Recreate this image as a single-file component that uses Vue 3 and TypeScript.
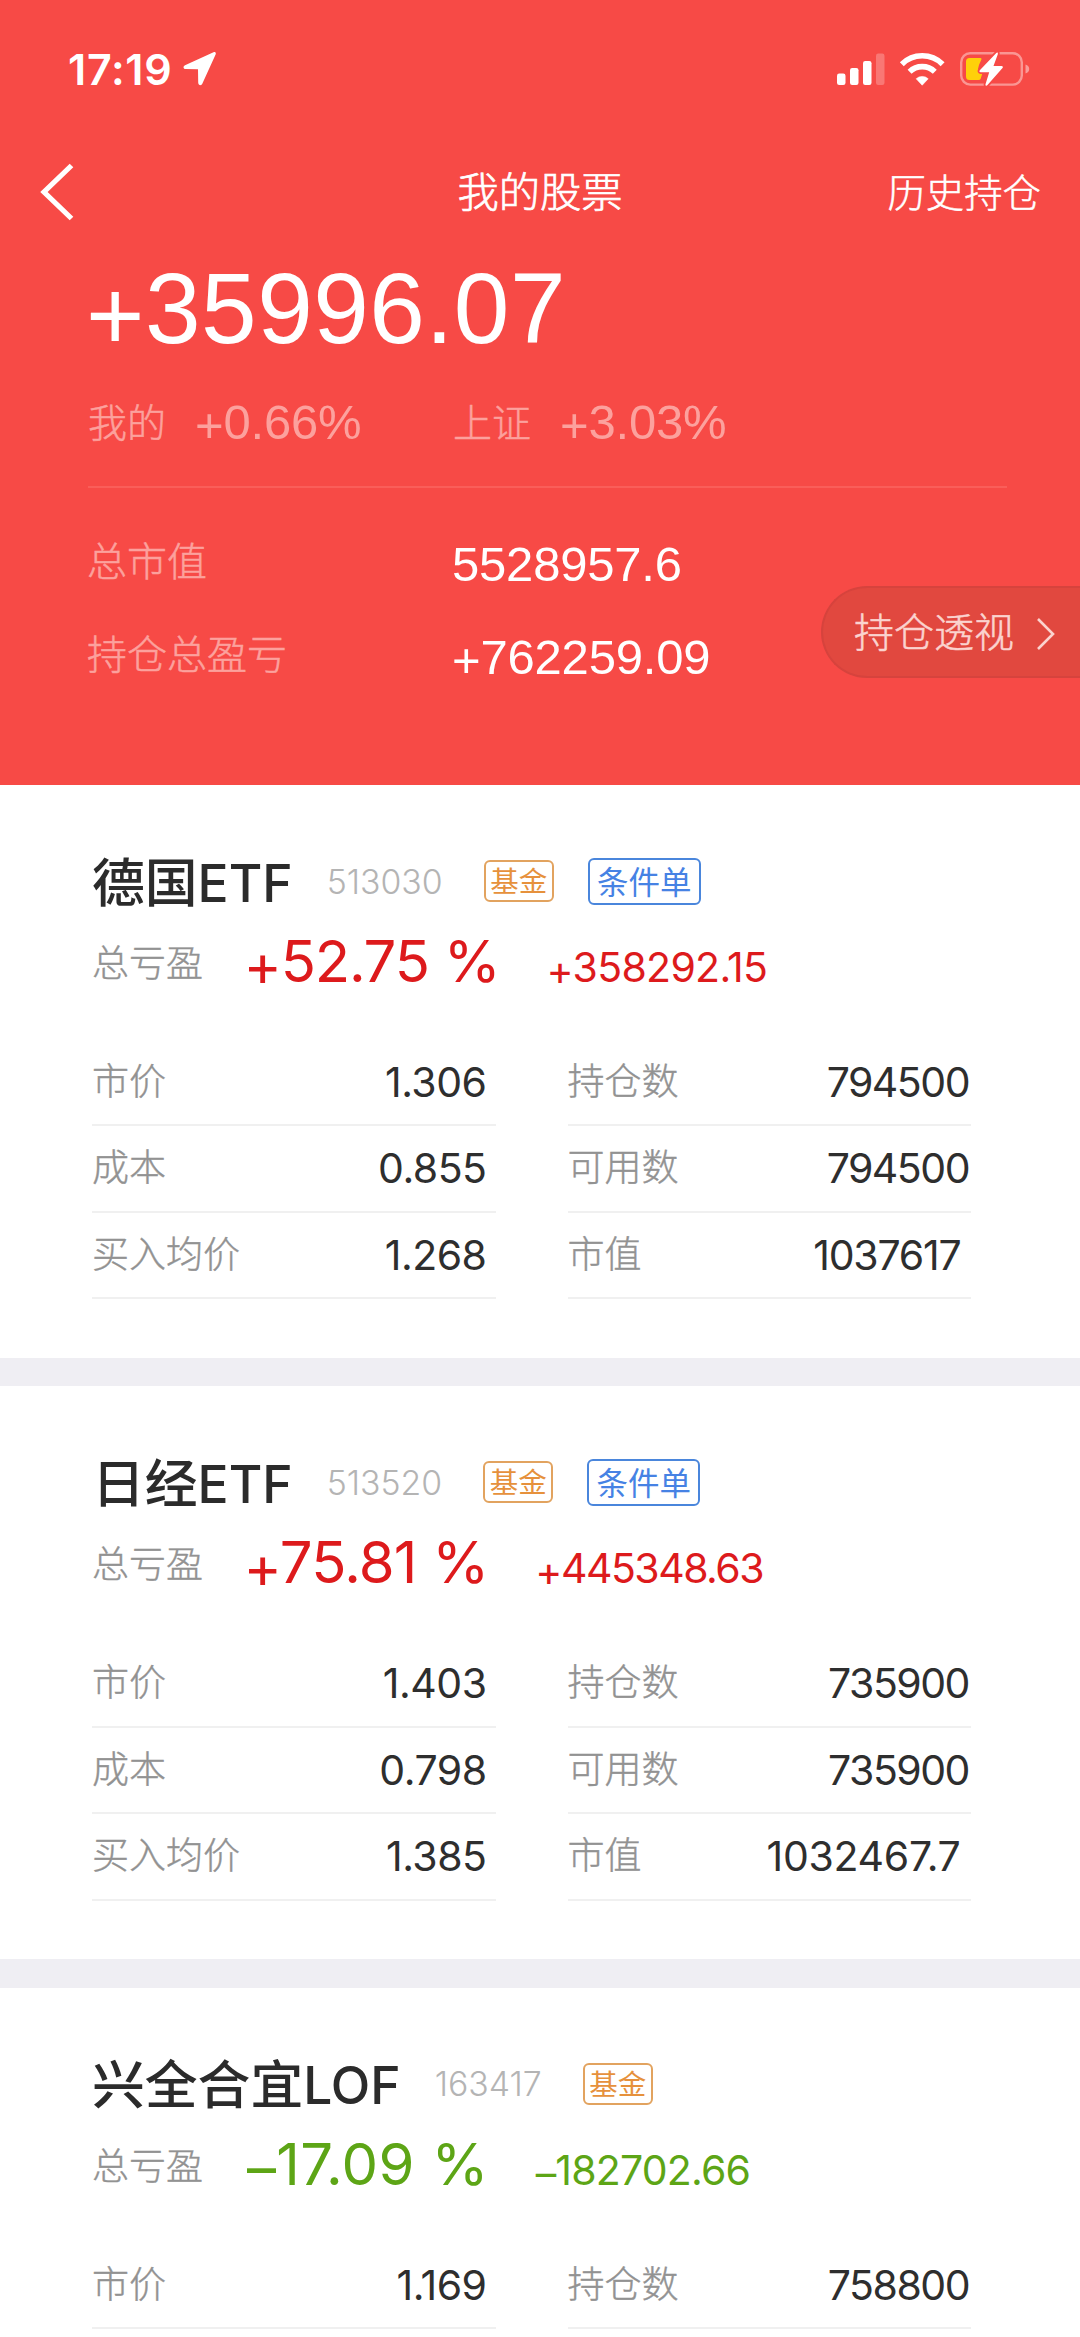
<script setup lang="ts">
interface Cell {
  label: string
  value: string
  inset?: boolean
}

interface Holding {
  name: string
  suffix: string
  code: string
  conditional: boolean
  up: boolean
  percent: string
  amount: string
  tracking: [number, number]
  left: Cell[]
  right: Cell[]
}

const holdings: Holding[] = [
  {
    name: '德国',
    suffix: 'ETF',
    code: '513030',
    conditional: true,
    up: true,
    percent: '52.75 %',
    amount: '358292.15',
    tracking: [-1.2, -0.7],
    left: [
      { label: '市价', value: '1.306' },
      { label: '成本', value: '0.855' },
      { label: '买入均价', value: '1.268' },
    ],
    right: [
      { label: '持仓数', value: '794500' },
      { label: '可用数', value: '794500' },
      { label: '市值', value: '1037617', inset: true },
    ],
  },
  {
    name: '日经',
    suffix: 'ETF',
    code: '513520',
    conditional: true,
    up: true,
    percent: '75.81 %',
    amount: '445348.63',
    tracking: [-0.8, -1.5],
    left: [
      { label: '市价', value: '1.403' },
      { label: '成本', value: '0.798' },
      { label: '买入均价', value: '1.385' },
    ],
    right: [
      { label: '持仓数', value: '735900' },
      { label: '可用数', value: '735900' },
      { label: '市值', value: '1032467.7', inset: true },
    ],
  },
  {
    name: '兴全合宜',
    suffix: 'LOF',
    code: '163417',
    conditional: false,
    up: false,
    percent: '17.09 %',
    amount: '182702.66',
    tracking: [0.3, -0.8],
    left: [{ label: '市价', value: '1.169' }],
    right: [{ label: '持仓数', value: '758800' }],
  },
]

const isWhole = (value: string): boolean => !value.includes('.')
</script>

<template>
  <div class="screen">
    <header class="hero">
      <div class="status">
        <span class="clock">17:19</span>
        <svg class="locate" width="34" height="35" viewBox="0 0 34 35">
          <path d="M30.5 1.2 2 14.2C-.2 15.3.1 18 2.600 18.100L15 18.300 15.200 31.500C15.300 34.500 18.200 35 19.300 32.700L32.600 3.500C33.300 1.700 32.200.5 30.500 1.200Z" fill="#fff" />
        </svg>
        <svg class="signals" width="194" height="36" viewBox="0 0 194 36">
          <rect x="0" y="22.500" width="8.500" height="11.500" rx="2.200" fill="#fff" />
          <rect x="13" y="17" width="8.500" height="17" rx="2.200" fill="#fff" />
          <rect x="26" y="10" width="8.500" height="24" rx="2.200" fill="#fff" />
          <rect x="39" y="2.500" width="8.500" height="31.500" rx="2.200" fill="#fff" opacity=".25" />
          <g fill="none" stroke="#fff" stroke-width="5.600">
            <path d="M64.800 13.200A29 29 0 0 1 105.600 13.200" />
            <path d="M72.600 20.800A18 18 0 0 1 97.800 20.800" />
          </g>
          <path d="M85.200 34.200 79.200 27.800A8.800 8.800 0 0 1 91.200 27.800Z" fill="#fff" stroke="#fff" stroke-width=".6" stroke-linejoin="round" />
          <rect x="124.200" y="2.200" width="60.600" height="31.400" rx="9" fill="none" stroke="#fff" stroke-opacity=".42" stroke-width="2.400" />
          <path d="M188.500 13.500C191 14.200 192.200 16 192.200 18S191 21.800 188.500 22.500Z" fill="#fff" fill-opacity=".45" />
          <path d="M132.500 7H143.500Q145 7 144.400 8.500L142 14 141 18 142 20 145.300 22.500 143.800 27.500Q143.300 29 141.500 29H132.500Q129 29 129 25.500V10.500Q129 7 132.500 7Z" fill="#ffd00a" />
          <path d="M159.300 2 142.800 19.200C142 20.200 142.500 21.200 143.700 21.200H152.200L148.500 33.200C148.200 34.800 149.500 35.200 150.500 34L165.500 17C166.400 15.900 165.800 14.900 164.500 14.900H156.500L160.800 3.200C161.200 1.500 160.200 1 159.300 2Z" fill="#fff" stroke="#f74a46" stroke-width="3.600" paint-order="stroke" />
        </svg>
      </div>

      <nav class="nav">
        <svg class="back" width="36" height="58" viewBox="0 0 36 58">
          <path d="M32.500 2.500 5 29 32.500 55.500" fill="none" stroke="#fff" stroke-width="5.200" />
        </svg>
        <h1>我的股票</h1>
        <a class="history">历史持仓</a>
      </nav>

      <div class="total"><span class="sign">+</span>35996.07</div>

      <div class="compare">
        <div class="pair"><span class="cjk">我的</span><span class="num"><span class="sign">+</span>0.66%</span></div>
        <div class="pair"><span class="cjk">上证</span><span class="num"><span class="sign">+</span>3.03%</span></div>
      </div>

      <div class="sums">
        <div class="sum"><span class="cjk">总市值</span><span class="num">5528957.6</span></div>
        <div class="sum"><span class="cjk">持仓总盈亏</span><span class="num"><span class="sign">+</span>762259.09</span></div>
      </div>

      <a class="pill">
        <span>持仓透视</span>
        <svg width="20" height="34" viewBox="0 0 20 34">
          <path d="M2 2 17 17 2 32" fill="none" stroke="#fbd3cf" stroke-width="2.600" />
        </svg>
      </a>
    </header>

    <section v-for="h in holdings" :key="h.code" class="card">
      <div class="title">
        <h2>{{ h.name }}<span>{{ h.suffix }}</span></h2>
        <span class="code">{{ h.code }}</span>
        <span class="tag fund">基金</span>
        <span v-if="h.conditional" class="tag cond">条件单</span>
      </div>
      <div class="profit" :class="h.up ? 'up' : 'down'">
        <span class="label">总亏盈</span>
        <span class="percent" :style="{ letterSpacing: h.tracking[0] + 'px' }"><span class="sign">{{ h.up ? '+' : '–' }}</span>{{ h.percent }}</span>
        <span class="amount" :style="{ letterSpacing: h.tracking[1] + 'px' }"><span class="sign">{{ h.up ? '+' : '–' }}</span>{{ h.amount }}</span>
      </div>
      <div class="grid">
        <dl class="col left">
          <div v-for="c in h.left" :key="c.label" class="cell">
            <dt>{{ c.label }}</dt>
            <dd>{{ c.value }}</dd>
          </div>
        </dl>
        <dl class="col right">
          <div v-for="c in h.right" :key="c.label" class="cell">
            <dt>{{ c.label }}</dt>
            <dd :class="{ inset: c.inset, whole: isWhole(c.value) }">{{ c.value }}</dd>
          </div>
        </dl>
      </div>
    </section>
  </div>
</template>

<style>
body {
  margin: 0;
  background: #fff;
}
</style>

<style scoped>
.screen {
  width: 1080px;
  height: 2337px;
  overflow: hidden;
  background: #efeef3;
  font-family: Inter, "Noto Sans CJK SC", sans-serif;
}
.screen * {
  box-sizing: border-box;
  white-space: nowrap;
}
h1,
h2,
dl,
dd {
  margin: 0;
  font-weight: 400;
}

.hero {
  position: relative;
  height: 785px;
  background: #f74a46;
  color: #fff;
}
.status {
  display: flex;
  align-items: center;
  height: 137px;
  padding: 0 49px 0 68px;
}
.clock {
  font-size: 43px;
  font-weight: 600;
  letter-spacing: 0.7px;
}
.locate {
  margin-left: 11px;
}
.signals {
  margin-left: auto;
}
.nav {
  display: grid;
  grid-template-columns: 1fr auto 1fr;
  align-items: center;
  height: 110px;
  padding: 0 39px 0 39px;
  font-family: "Noto Sans CJK SC", sans-serif;
}
h1 {
  padding-bottom: 6px;
  font-size: 41.300px;
  line-height: 100px;
  font-weight: 300;
  -webkit-text-stroke: 0.7px;
}
.history {
  justify-self: end;
  padding-bottom: 5px;
  font-size: 38.400px;
  line-height: 100px;
  font-weight: 300;
  -webkit-text-stroke: 0.5px;
}
.sign {
  position: relative;
  top: 0.07em;
}
.total {
  height: 123px;
  padding-left: 86px;
  font: 100px/123px "Liberation Sans", Arial, sans-serif;
  letter-spacing: 0.5px;
}
.compare {
  display: flex;
  height: 118px;
  margin: 0 73px 0 88px;
  border-bottom: 2px solid #fa5e59;
  color: #fca19d;
}
.pair {
  display: flex;
  width: 365px;
}
.pair .cjk {
  width: 107px;
}
.cjk {
  font: 300 39px/101px "Noto Sans CJK SC", sans-serif;
  -webkit-text-stroke: 0.5px;
}
.num {
  font: 49px/104px "Liberation Sans", Arial, sans-serif;
  letter-spacing: -0.2px;
}
.sums {
  padding: 30px 0 0 87px;
}
.sum {
  display: flex;
  height: 92.500px;
}
.sum .cjk {
  width: 365px;
  color: #fca19d;
  font-size: 40px;
  line-height: 83px;
}
.sum .num {
  line-height: 92px;
}
.pill {
  position: absolute;
  top: 586px;
  right: 0;
  display: flex;
  align-items: center;
  width: 259px;
  height: 92px;
  padding-left: 31px;
  border: 2px solid #d6433d;
  border-right: 0;
  border-radius: 46px 0 0 46px;
  background: #e1483f;
  color: #fbd3cf;
  font: 300 40px/88px "Noto Sans CJK SC", sans-serif;
  -webkit-text-stroke: 0.5px;
}
.pill span {
  margin-top: -4px;
}
.pill svg {
  margin-left: 22px;
  margin-top: 4px;
}

.card {
  height: 572.700px;
  margin-bottom: 28.800px;
  padding: 58px 0 0 92px;
  background: #fff;
}
.title {
  display: flex;
  align-items: center;
  height: 76px;
}
h2 {
  color: #2b2b2b;
  font: 500 52.800px/69px "Noto Sans CJK SC", sans-serif;
}
h2 span {
  font-family: Inter, sans-serif;
  font-size: 51.500px;
}
.code {
  margin-left: 34px;
  color: #b4b4b4;
  font-size: 33.800px;
  font-weight: 300;
}
.tag {
  border: 2px solid;
  border-radius: 6px;
  font-family: "Noto Sans CJK SC", sans-serif;
  text-align: center;
}
.fund {
  width: 70px;
  height: 42px;
  margin-left: 41px;
  border-color: #e2a35f;
  color: #e6913c;
  font-size: 28.500px;
  line-height: 35px;
}
.cond {
  width: 113px;
  height: 47px;
  margin-left: 34px;
  border-color: #4a86dc;
  color: #4682e4;
  font-size: 31.500px;
  line-height: 40px;
}
.profit {
  display: flex;
  height: 86px;
}
.label {
  width: 151.500px;
  color: #929292;
  font: 300 37px/85px "Noto Sans CJK SC", sans-serif;
  -webkit-text-stroke: 0.4px;
}
.percent {
  font-size: 58px;
  line-height: 84px;
}
.amount {
  margin-left: 47px;
  font-size: 41px;
  line-height: 96px;
}
.up {
  color: #dd1a1c;
}
.down {
  color: #5da516;
}
.down .label {
  width: 155px;
}
.grid {
  display: flex;
  gap: 71.500px;
  padding-top: 35px;
}
.col.left {
  width: 404px;
}
.col.right {
  width: 403px;
}
.cell {
  display: flex;
  justify-content: space-between;
  height: 86.400px;
  border-bottom: 2px solid #f0f0f0;
}
dt {
  color: #929292;
  font: 300 37px/78px "Noto Sans CJK SC", sans-serif;
  -webkit-text-stroke: 0.4px;
}
dd {
  color: #2e2e2e;
  font-size: 41px;
  line-height: 84px;
  letter-spacing: -0.5px;
}
dd.whole {
  padding-right: 1.500px;
  letter-spacing: -1.5px;
}
.left dd {
  padding-right: 9.500px;
}
dd.inset {
  padding-right: 10px;
  letter-spacing: -0.3px;
}
dd.inset.whole {
  padding-right: 10px;
  letter-spacing: -1.2px;
}
</style>
